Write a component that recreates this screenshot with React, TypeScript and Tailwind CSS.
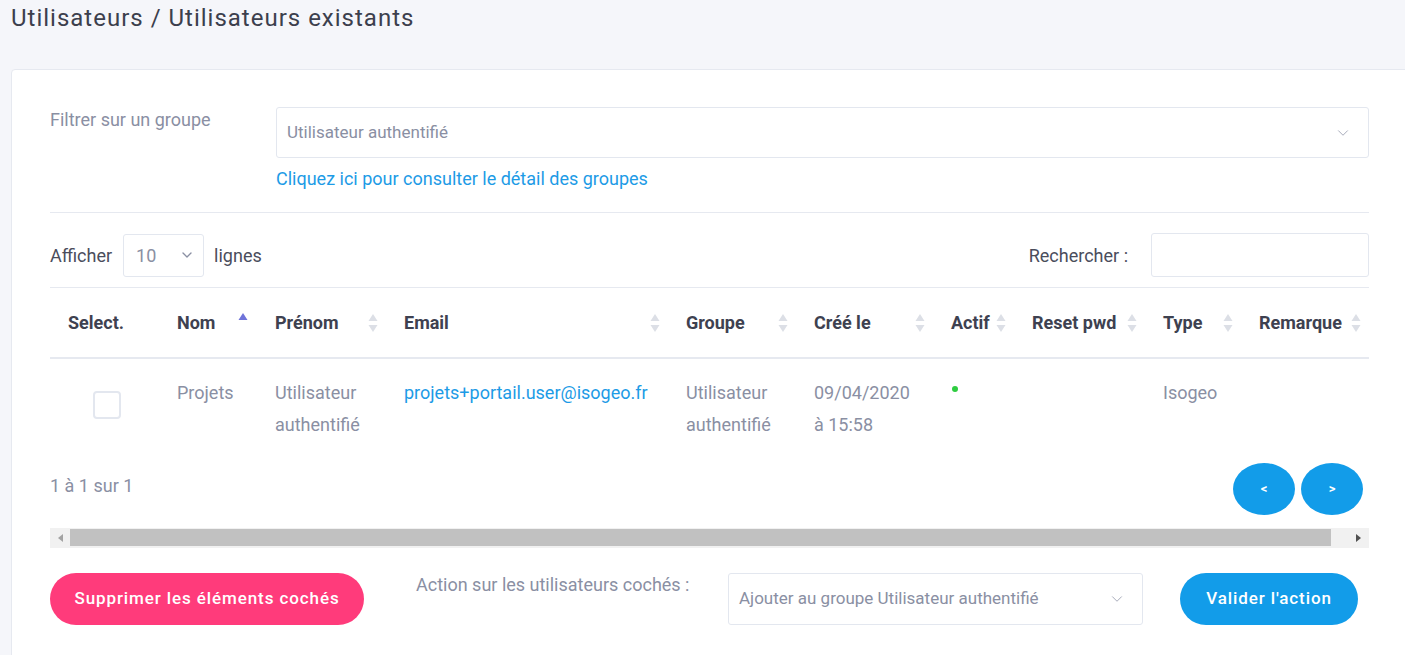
import { ChevronDown } from "lucide-react";

const cols = [
  { label: "Select.", w: "w-[109px]", sort: "none" },
  { label: "Nom", w: "w-[98px]", sort: "asc" },
  { label: "Prénom", w: "w-[129px]", sort: "both" },
  { label: "Email", w: "w-[282px]", sort: "both" },
  { label: "Groupe", w: "w-[128px]", sort: "both" },
  { label: "Créé le", w: "w-[137px]", sort: "both" },
  { label: "Actif", w: "w-[81px]", sort: "both" },
  { label: "Reset pwd", w: "w-[131px]", sort: "both" },
  { label: "Type", w: "w-[96px]", sort: "both" },
  { label: "Remarque", w: "w-[128px]", sort: "both" },
];

function SortIcon({ mode }: { mode: string }) {
  if (mode === "none") return null;
  if (mode === "asc") {
    return (
      <svg width="10" height="18" viewBox="0 0 10 18" className="absolute right-[9px] top-[24px]">
        <path d="M5 1 L9.5 8 L0.5 8 Z" fill="#6f73d9" />
      </svg>
    );
  }
  return (
    <svg width="10" height="20" viewBox="0 0 10 20" className="absolute right-[8px] top-[25px]">
      <path d="M5 1 L9.5 8 L0.5 8 Z" fill="#dcdfe6" />
      <path d="M5 19 L9.5 12 L0.5 12 Z" fill="#dcdfe6" />
    </svg>
  );
}

export default function App() {
  return (
    <div className="min-h-[655px] w-[1405px] overflow-hidden bg-[#f5f6fa] font-['Roboto',sans-serif] text-[18px]">
      <h1 className="pl-[11px] pt-[3px] text-[24px] leading-[30px] tracking-[1px] text-[#3c3f4d]">
        Utilisateurs / Utilisateurs existants
      </h1>

      <div className="ml-[11px] mt-[36px] w-[1397px] rounded-tl-[4px] border border-[#e6e9f0] bg-white px-[38px] pt-[37px] pb-[60px]">
        {/* filter */}
        <div className="flex">
          <div className="w-[226px] pt-[1px] text-[18px] leading-[24px] text-[#8a8fa3]">Filtrer sur un groupe</div>
          <div className="flex-1">
            <div className="flex h-[51px] items-center justify-between rounded-[3px] border border-[#e3e7ef] pl-[10px] pr-[16px] text-[17px] text-[#8a8fa3]">
              <span>Utilisateur authentifié</span>
              <ChevronDown size={18} strokeWidth={1} color="#8a8fa3" />
            </div>
            <a className="mt-[8px] block text-[18px] leading-[26px] text-[#1d9be6]">
              Cliquez ici pour consulter le détail des groupes
            </a>
          </div>
        </div>

        <div className="mt-[20px] h-px bg-[#e6e9f0]" />

        {/* length + search */}
        <div className="mt-[20px] flex items-center justify-between">
          <div className="flex items-center text-[18px] text-[#4a4d5c]">
            <span>Afficher</span>
            <div className="ml-[11px] mr-[10px] flex h-[43px] w-[81px] items-center justify-between rounded-[3px] border border-[#e3e7ef] pl-[12px] pr-[8px] text-[#8a8fa3]">
              <span>10</span>
              <ChevronDown size={16} strokeWidth={2} color="#8a8fa3" />
            </div>
            <span>lignes</span>
          </div>
          <div className="flex items-center text-[18px] text-[#4a4d5c]">
            <span className="mr-[23px]">Rechercher :</span>
            <div className="h-[44px] w-[218px] rounded-[3px] border border-[#e3e7ef]" />
          </div>
        </div>

        {/* table */}
        <div className="mt-[10px] overflow-hidden">
          <table className="w-[1319px] table-fixed border-collapse">
            <colgroup>
              {cols.map((c) => (
                <col key={c.label} className={c.w} />
              ))}
            </colgroup>
            <thead>
              <tr className="border-t border-b-2 border-t-[#e6e9f0] border-b-[#e6e9f0]">
                {cols.map((c) => (
                  <th
                    key={c.label}
                    className="relative h-[70px] pl-[18px] text-left align-middle text-[18px] font-bold text-[#3e4150]"
                  >
                    {c.label}
                    <SortIcon mode={c.sort} />
                  </th>
                ))}
              </tr>
            </thead>
            <tbody>
              <tr className="align-top text-[18px] leading-[32px] text-[#8a8fa3]">
                <td className="pt-[18px] pb-[14px]">
                  <div className="ml-[43px] mt-[14px] h-[28px] w-[28px] rounded-[4px] border-2 border-[#e3e7ef]" />
                </td>
                <td className="pl-[18px] pt-[18px] pb-[14px]">Projets</td>
                <td className="pl-[18px] pt-[18px] pb-[14px]">
                  Utilisateur
                  <br />
                  authentifié
                </td>
                <td className="pl-[18px] pt-[18px] pb-[14px] text-[#1d9be6]">projets+portail.user@isogeo.fr</td>
                <td className="pl-[18px] pt-[18px] pb-[14px]">
                  Utilisateur
                  <br />
                  authentifié
                </td>
                <td className="pl-[18px] pt-[18px] pb-[14px]">
                  09/04/2020
                  <br />à 15:58
                </td>
                <td className="pl-[18px] pt-[18px] pb-[14px]">
                  <span className="ml-[1px] mt-[9px] block h-[6px] w-[6px] rounded-full bg-[#2ecc40]" />
                </td>
                <td className="pl-[18px] pt-[18px] pb-[14px]"></td>
                <td className="pl-[18px] pt-[18px] pb-[14px]">Isogeo</td>
                <td className="pl-[18px] pt-[18px] pb-[14px]"></td>
              </tr>
            </tbody>
          </table>
        </div>

        {/* info + paginate */}
        <div className="mt-[8px] flex items-start justify-between">
          <span className="mt-[9px] text-[18px] leading-[27px] text-[#8a8fa3]">1 à 1 sur 1</span>
          <div className="mr-[6px] flex gap-[6px]">
            <button className="flex h-[52px] w-[62px] items-center justify-center rounded-[50%] bg-[#129ce9] text-[13px] font-bold text-white">
              &lt;
            </button>
            <button className="flex h-[52px] w-[62px] items-center justify-center rounded-[50%] bg-[#129ce9] text-[13px] font-bold text-white">
              &gt;
            </button>
          </div>
        </div>

        {/* scrollbar */}
        <div className="mt-[13px] flex h-[20px] items-center bg-[#f1f1f1]">
          <div className="flex w-[20px] justify-center">
            <svg width="5" height="8" viewBox="0 0 5 8">
              <path d="M5 0 L0 4 L5 8 Z" fill="#a3a3a3" />
            </svg>
          </div>
          <div className="h-[17px] w-[1261px] bg-[#c1c1c1]" />
          <div className="flex flex-1 justify-end pr-[8px]">
            <svg width="5" height="8" viewBox="0 0 5 8">
              <path d="M0 0 L5 4 L0 8 Z" fill="#505050" />
            </svg>
          </div>
        </div>

        {/* bulk actions */}
        <div className="mt-[25px] flex items-start">
          <button className="h-[52px] w-[314px] rounded-full bg-[#ff3b7b] text-[17px] font-medium tracking-[0.9px] text-white">
            Supprimer les éléments cochés
          </button>
          <span className="ml-[52px] w-[312px] text-[18px] leading-[24px] text-[#8a8fa3]">
            Action sur les utilisateurs cochés :
          </span>
          <div className="flex h-[52px] w-[415px] items-center justify-between rounded-[3px] border border-[#e3e7ef] pl-[10px] pr-[16px] text-[17px] text-[#8a8fa3]">
            <span>Ajouter au groupe Utilisateur authentifié</span>
            <ChevronDown size={18} strokeWidth={1} color="#8a8fa3" />
          </div>
          <button className="ml-[37px] h-[52px] w-[178px] rounded-full bg-[#129ce9] text-[17px] font-medium tracking-[0.9px] text-white">
            Valider l'action
          </button>
        </div>
      </div>
    </div>
  );
}
